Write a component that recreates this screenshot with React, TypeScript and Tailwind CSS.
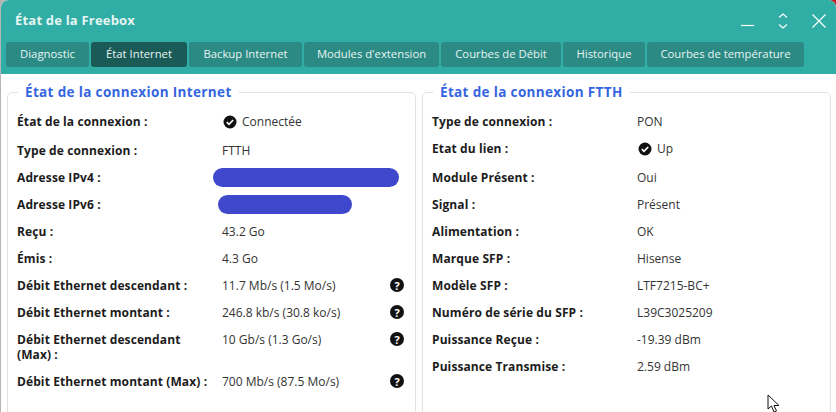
import React from 'react';

const tabs = [
    { label: 'Diagnostic', width: 'w-[83px]' },
    { label: 'État Internet', width: 'w-[96px]' },
    { label: 'Backup Internet', width: 'w-[113px]' },
    { label: "Modules d'extension", width: 'w-[135px]' },
    { label: 'Courbes de Débit', width: 'w-[120px]' },
    { label: 'Historique', width: 'w-[82px]' },
    { label: 'Courbes de température', width: 'w-[157px]' },
];

type Row = { label: string; value?: string; status?: boolean; help?: boolean; blur?: string };

const internetRows: Row[] = [
    { label: 'État de la connexion :', value: 'Connectée', status: true },
    { label: 'Type de connexion :', value: 'FTTH' },
    { label: 'Adresse IPv4 :', blur: 'w-[186px] -ml-[9px]' },
    { label: 'Adresse IPv6 :', blur: 'w-[134px] -ml-[4px]' },
    { label: 'Reçu :', value: '43.2 Go' },
    { label: 'Émis :', value: '4.3 Go' },
    { label: 'Débit Ethernet descendant :', value: '11.7 Mb/s (1.5 Mo/s)', help: true },
    { label: 'Débit Ethernet montant :', value: '246.8 kb/s (30.8 ko/s)', help: true },
    { label: 'Débit Ethernet descendant (Max) :', value: '10 Gb/s (1.3 Go/s)', help: true },
    { label: 'Débit Ethernet montant (Max) :', value: '700 Mb/s (87.5 Mo/s)', help: true },
];

const ftthRows: Row[] = [
    { label: 'Type de connexion :', value: 'PON' },
    { label: 'Etat du lien :', value: 'Up', status: true },
    { label: 'Module Présent :', value: 'Oui' },
    { label: 'Signal :', value: 'Présent' },
    { label: 'Alimentation :', value: 'OK' },
    { label: 'Marque SFP :', value: 'Hisense' },
    { label: 'Modèle SFP :', value: 'LTF7215-BC+' },
    { label: 'Numéro de série du SFP :', value: 'L39C3025209' },
    { label: 'Puissance Reçue :', value: '-19.39 dBm' },
    { label: 'Puissance Transmise :', value: '2.59 dBm' },
];

const CheckIcon = () => (
    <svg width="14" height="14" viewBox="0 0 14 14" className="ml-[1px] shrink-0">
        <circle cx="7" cy="7" r="6.5" fill="#111" />
        <path d="M3.8 7.2 6 9.4l4.2-4.4" fill="none" stroke="#fff" strokeWidth="1.7" />
    </svg>
);

const HelpIcon = () => (
    <div className="mr-[2px] flex h-[14px] w-[14px] shrink-0 items-center justify-center rounded-full bg-[#111] text-[11px] font-bold leading-none text-white">?</div>
);

const InfoRow = ({ row }: { row: Row }) => (
    <div className={`flex items-start pt-[6px] ${row.status ? 'pb-[8px]' : 'pb-[6px]'}`}>
        <div className="w-[205px] shrink-0 pr-2 font-bold leading-[15px] tracking-[0.1px] text-[#1c1c1c]">{row.label}</div>
        <div className="flex h-[15px] flex-1 items-center gap-[5px] leading-[15px] text-[#333]">
            {row.status && <CheckIcon />}
            {row.value && <span>{row.value}</span>}
            {row.blur && <div className={`${row.blur} h-[19px] rounded-full bg-[#3f48cc]`}></div>}
        </div>
        {row.help && <HelpIcon />}
    </div>
);

const Section = ({ title, rows }: { title: string; rows: Row[] }) => (
    <fieldset className="h-[400px] w-[409px] min-w-0 rounded-[5px] border border-[#e2e2e2] px-[9px]">
        <legend className="ml-[1px] px-[7px] text-[13.5px] font-bold leading-[18px] tracking-[0.35px] text-[#3565e0]">{title}</legend>
        <div className="flex flex-col pt-[7px]">
            {rows.map(row => <InfoRow key={row.label} row={row} />)}
        </div>
    </fieldset>
);

export default function App() {
    return (
        <div className="relative h-[412px] w-[836px] overflow-hidden bg-[#b5b5b5] pl-[1px] font-['Open_Sans','Noto_Sans',sans-serif] text-[12px]">
            <div className="absolute right-0 top-0 h-[8px] w-[8px] bg-[#c2202c]"></div>
            <div className="relative flex h-full flex-col overflow-hidden rounded-t-[8px] bg-white">
                {/* Header */}
                <div className="h-[74px] shrink-0 bg-[#30ada4] pl-[5px]">
                    <div className="flex h-[42px] items-center justify-between pl-[9px] pr-[10px] text-white">
                        <span className="text-[13px] font-bold tracking-[0.2px] text-[#e6f5f3]">État de la Freebox</span>
                        <div className="flex items-center gap-[24px]">
                            <svg width="13" height="14" viewBox="0 0 13 14" fill="none" stroke="currentColor" strokeWidth="1.2">
                                <path d="M0 11.5h13" />
                            </svg>
                            <svg width="10" height="16" viewBox="0 0 10 16" fill="none" stroke="currentColor" strokeWidth="1.1">
                                <path d="M1 4.500 5 1l4 3.500M1 11.500 5 15l4-3.500" />
                            </svg>
                            <svg width="14" height="14" viewBox="0 0 14 14" fill="none" stroke="currentColor" strokeWidth="1.2">
                                <path d="M.5.5l13 13M13.500.5l-13 13" />
                            </svg>
                        </div>
                    </div>
                    <div className="flex gap-[2px]">
                        {tabs.map(tab => (
                            <div
                                key={tab.label}
                                className={`${tab.width} flex h-[25px] items-center justify-center whitespace-nowrap rounded-[3px] text-[11.3px] font-medium text-[#e8f4f2] ${tab.label === 'État Internet' ? 'bg-[#1a5b57]' : 'bg-[#2b8a84]'}`}
                            >
                                {tab.label}
                            </div>
                        ))}
                    </div>
                </div>

                {/* Sections */}
                <div className="flex flex-1 gap-[6px] pl-[6px] pt-[9px]">
                    <Section title="État de la connexion Internet" rows={internetRows} />
                    <Section title="État de la connexion FTTH" rows={ftthRows} />
                </div>
            </div>
            <svg width="14" height="19" viewBox="0 0 14 19" className="absolute left-[767px] top-[394px]">
                <path d="M1 1v14l3.500-3 2.500 6 2.500-1-2.500-5.500h5z" fill="#fff" stroke="#111" />
            </svg>
        </div>
    );
}
